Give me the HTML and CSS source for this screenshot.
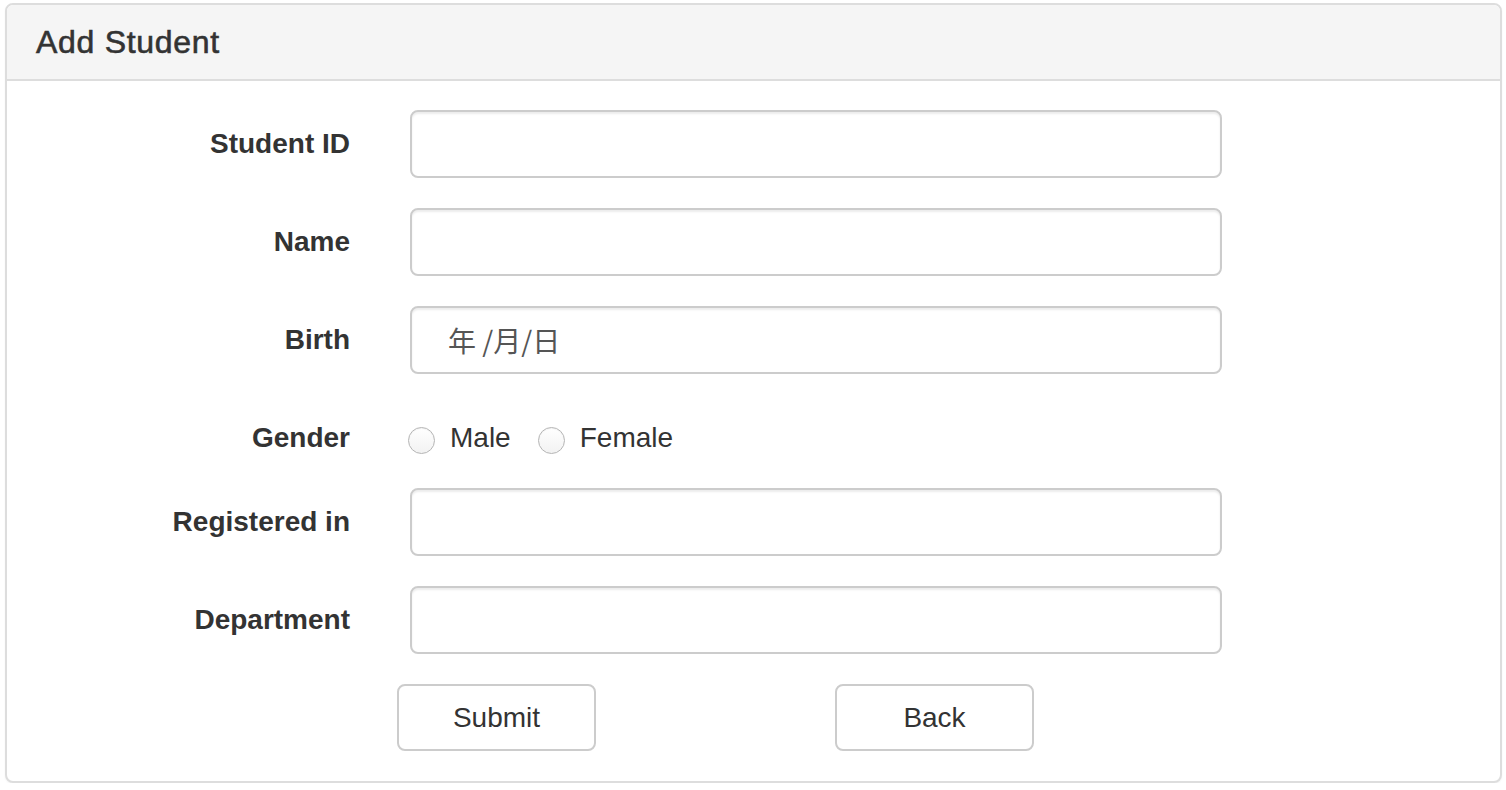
FILE: index.html
```html
<!DOCTYPE html>
<html lang="en">
<head>
<meta charset="utf-8">
<title>Add Student</title>
<link rel="stylesheet" href="styles.css">
</head>
<body>
<div class="panel">
  <div class="panel-heading">
    <h3 class="panel-title">Add Student</h3>
  </div>
  <form class="panel-body">
    <div class="form-row">
      <label class="form-label" for="sid">Student ID</label>
      <input class="form-control" id="sid" type="text">
    </div>
    <div class="form-row">
      <label class="form-label" for="name">Name</label>
      <input class="form-control" id="name" type="text">
    </div>
    <div class="form-row">
      <label class="form-label" for="birth">Birth</label>
      <input class="form-control date-control" id="birth" type="text" placeholder="年 /月/日">
    </div>
    <div class="form-row gender-row">
      <span class="form-label">Gender</span>
      <div class="radio-group">
        <label class="radio-inline"><input type="radio" name="gender" class="radio"><span>Male</span></label>
        <label class="radio-inline"><input type="radio" name="gender" class="radio"><span>Female</span></label>
      </div>
    </div>
    <div class="form-row">
      <label class="form-label" for="reg">Registered in</label>
      <input class="form-control" id="reg" type="text">
    </div>
    <div class="form-row">
      <label class="form-label" for="dept">Department</label>
      <input class="form-control" id="dept" type="text">
    </div>
    <div class="button-row">
      <button type="submit" class="btn btn-submit">Submit</button>
      <button type="button" class="btn btn-back">Back</button>
    </div>
  </form>
</div>
</body>
</html>
```
FILE: styles.css
```css
* {
  box-sizing: border-box;
}

html, body {
  margin: 0;
  padding: 0;
  background: #fff;
}

body {
  font-family: "Liberation Sans", Arial, "Noto Sans CJK SC", sans-serif;
  font-size: 28px;
  color: #333;
  padding: 3px 4px 0 5px;
}

.panel {
  width: 1497px;
  height: 780px;
  border: 2px solid #ddd;
  border-radius: 8px;
  background: #fff;
  box-shadow: 0 1px 2px rgba(0, 0, 0, 0.05);
  overflow: hidden;
}

.panel-heading {
  background: #f5f5f5;
  border-bottom: 2px solid #ddd;
  padding: 20px 29px;
  height: 76px;
}

.panel-title {
  margin: 0;
  font-size: 32px;
  font-weight: 500;
  line-height: 34px;
  color: #333;
  letter-spacing: 0.7px;
  -webkit-text-stroke: 0.6px #333;
}

.panel-body {
  padding: 29px 30px 30px 30px;
  display: flex;
  flex-direction: column;
  gap: 30px;
}

.form-row {
  display: flex;
  align-items: flex-start;
  gap: 60px;
  height: 68px;
}

.gender-row {
  height: 54px;
}

.form-label {
  width: 313px;
  flex: none;
  text-align: right;
  font-weight: bold;
  padding-top: 14px;
  line-height: 40px;
}

.form-control {
  width: 812px;
  height: 68px;
  border: 2px solid #ccc;
  border-radius: 8px;
  padding: 12px 24px;
  font-family: inherit;
  font-size: 28px;
  color: #555;
  background: #fff;
  box-shadow: inset 0 2px 2px rgba(0, 0, 0, 0.075);
  outline: none;
}

.date-control {
  padding-left: 36px;
  font-family: "Noto Sans CJK SC", "Liberation Sans", sans-serif;
}

.date-control::placeholder {
  color: #555;
  opacity: 1;
}

.radio-group {
  display: flex;
  gap: 27px;
  margin-left: -2px;
  padding-top: 14px;
}

.radio-inline {
  display: flex;
  align-items: center;
  gap: 15px;
  line-height: 40px;
  font-weight: normal;
}

.radio {
  appearance: none;
  -webkit-appearance: none;
  width: 27px;
  height: 27px;
  margin: 4px 0 0 0;
  border: 1.5px solid #b5b5b5;
  border-radius: 50%;
  background: linear-gradient(#fff, #f2f2f2);
  box-shadow: inset 0 1px 1px rgba(0, 0, 0, 0.05);
}

.button-row {
  display: flex;
  padding-left: 360px;
  gap: 239px;
}

.btn {
  width: 199px;
  height: 67px;
  border: 2px solid #ccc;
  border-radius: 8px;
  background: #fff;
  font-family: inherit;
  font-size: 28px;
  color: #333;
  padding: 0;
  cursor: pointer;
}
```
